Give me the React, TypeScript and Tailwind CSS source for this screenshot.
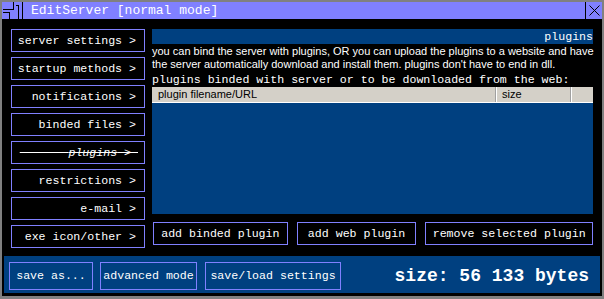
import React from 'react';

const MONO = "font-['Liberation_Mono','Courier_New',monospace]";
const SANS = "font-['Liberation_Sans',Arial,sans-serif]";

const NAV = [
  'server settings >',
  'startup methods >',
  'notifications >',
  'binded files >',
  'plugins',
  'restrictions >',
  'e-mail >',
  'exe icon/other >',
];

function TitleIcon() {
  return (
    <svg width="20" height="17" viewBox="0 0 20 17" className="block">
      <path d="M11.5 0 V7.5 H1 M1 10.5 H7.5 V17 M13.5 3.5 H16.5 V17" stroke="#000" strokeWidth="1" fill="none" shapeRendering="crispEdges" />
    </svg>
  );
}

function NavButton({ label }: { label: string }) {
  const struck = label === 'plugins';
  return (
    <div className="h-[23px] border border-[#8080ff] flex items-center justify-end pr-[8px] text-white text-[11.6px] leading-none">
      {struck ? (
        <span className="whitespace-pre line-through relative left-[2px]">
          {'       '}
          <span className="italic">plugins</span>
          {' > '}
        </span>
      ) : (
        <span className="whitespace-pre">{label}</span>
      )}
    </div>
  );
}

function ActionButton({ label, w }: { label: string; w: string }) {
  return (
    <div className={`${w} h-[23px] border border-[#8080ff] flex items-center justify-center text-white text-[11.6px] leading-none`}>
      {label}
    </div>
  );
}

export default function App() {
  return (
    <div className={`w-[604px] h-[299px] bg-[#808080] pt-[2px] pl-[2px] pr-[2px] pb-[3px] ${MONO}`}>
      <div className="w-full h-full bg-black flex flex-col">
        {/* Title bar */}
        <div className="h-[17px] flex bg-[#8080ff]">
          <div className="w-[20px] h-[17px] border-r border-black box-content">
            <TitleIcon />
          </div>
          <div className="flex-1 pl-[8px] text-[13px] leading-[17px] text-white">EditServer [normal mode]</div>
          <div className="w-[17px] h-[17px] border-l border-black flex items-center justify-center">
            <svg width="11" height="11" viewBox="0 0 11 11">
              <path d="M0.5 0.5 L10.5 10.5 M10.5 0.5 L0.5 10.5" stroke="#000" strokeWidth="1" />
            </svg>
          </div>
        </div>

        {/* Body */}
        <div className="flex gap-[7px] pt-[10px] px-[9px]">
          <div className="w-[135px] flex flex-col gap-[5px]">
            {NAV.map((n) => (
              <NavButton key={n} label={n} />
            ))}
          </div>

          <div className="w-[441px] flex flex-col">
            <div className="h-[15px] bg-[#004080] text-white text-[11.6px] leading-[15px] text-right">plugins</div>
            <p className={`${SANS} text-white text-[11px] leading-[13px] mt-[1px] whitespace-nowrap`}>
              you can bind the server with plugins, OR you can upload the plugins to a website and have
              <br />
              the server automatically download and install them. plugins don't have to end in dll.
            </p>
            <div className="text-white text-[11.6px] leading-[15px] mt-[1px] whitespace-nowrap">
              plugins binded with server or to be downloaded from the web:
            </div>
            <div className="flex flex-col">
              <div className={`${SANS} h-[16px] bg-[#d4d0c8] flex text-[11px] text-black leading-[15px] border-b border-white`}>
                <div className="w-[344px] pl-[6px] border-r border-[#a0a0a0]">plugin filename/URL</div>
                <div className="w-[75px] pl-[5px] border-l border-white border-r border-r-[#a0a0a0]">size</div>
                <div className="flex-1 border-l border-white"></div>
              </div>
              <div className="h-[111px] bg-[#004080]"></div>
            </div>
            <div className="flex gap-[9px] mt-[8px] pl-[1px]">
              <ActionButton label="add binded plugin" w="w-[135px]" />
              <ActionButton label="add web plugin" w="w-[120px]" />
              <ActionButton label="remove selected plugin" w="w-[168px]" />
            </div>
          </div>
        </div>

        {/* Footer */}
        <div className="mt-auto mx-[2px] mb-[3px] h-[37px] bg-[#004080] flex items-start pt-[6px] pl-[5px] pr-[11px]">
          <div className="w-[84px] h-[28px] border border-[#8080ff] flex items-center justify-center text-white text-[11.6px] leading-none">save as...</div>
          <div className="ml-[7px] w-[97px] h-[28px] border border-[#8080ff] flex items-center justify-center text-white text-[11.6px] leading-none">advanced mode</div>
          <div className="ml-[8px] w-[136px] h-[28px] border border-[#8080ff] flex items-center justify-center text-white text-[11.6px] leading-none">save/load settings</div>
          <div className="ml-auto h-[28px] flex items-center text-white text-[18px] font-bold leading-none">size: 56 133 bytes</div>
        </div>
      </div>
    </div>
  );
}
